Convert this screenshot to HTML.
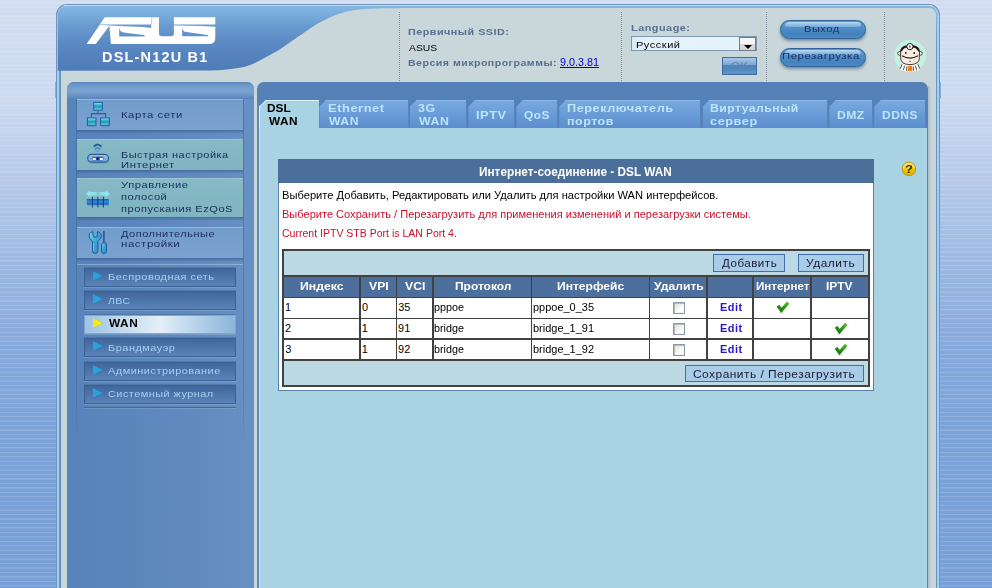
<!DOCTYPE html>
<html lang="ru">
<head>
<meta charset="utf-8">
<title>ASUS DSL-N12U B1 - DSL WAN</title>
<style>
*{box-sizing:border-box;margin:0;padding:0}
html,body{width:992px;height:588px;overflow:hidden}
body{position:relative;font-family:"Liberation Sans",sans-serif;
 background:
  repeating-linear-gradient(to bottom,rgba(255,255,255,0) 0,rgba(255,255,255,0) 2.100px,rgba(255,255,255,.14) 2.4px,rgba(255,255,255,.14) 3.300px,rgba(255,255,255,0) 3.6px,rgba(255,255,255,0) 4.45px),
  linear-gradient(to bottom,#d2ddf2 0,#ccd9f0 100px,#b5c9ea 183px,#9bb8e2 266px,#86a9dc 349px,#7ba3d9 432px,#78a0d7 588px);}
.abs{position:absolute}
.tx{position:absolute;white-space:nowrap;transform-origin:0 50%;display:block}
#wrap{left:56px;top:3.9px;width:884px;height:600px;background:#7294ba;border-radius:11px 11px 0 0;overflow:hidden}
#wrap i{position:absolute;bottom:0;display:block}
#w1{left:.8px;right:.8px;top:.8px;background:#a0d0f2;border-radius:10.2px 10.2px 0 0}
#w2{left:2.7px;right:2.7px;top:2.5px;background:linear-gradient(to bottom,#82b7e0 0,#6c96c2 40px,#6790bb 100%);border-radius:8.500px 8.5px 0 0}
#w3{left:4.8px;right:4.2px;top:4.1px;background:#bdd6e9;border-radius:7px 7px 0 0}
#w4{left:5.8px;right:4.2px;top:4.1px;background:#c9d6da;border-radius:6px 7px 0 0}
/* sidebar */
#side{left:67.3px;top:82px;width:186.4px;height:520px;border-radius:7px 7px 0 0;
 background:linear-gradient(to right,#5783bb 0,#5c87bd 40%,#6790c3 100%);overflow:hidden}
#sidecap{left:0;top:0;width:187px;height:17px;background:linear-gradient(to bottom,#5681b8 0,#6892c6 10%,#7aa2d1 45%,#779fce 60%,#6690c3 85%,#5b85bb 100%)}
.mi{left:9.5px;width:166.2px;border-top:1px solid rgba(255,255,255,.22)}
.mi.b{background:linear-gradient(to bottom,#719dcb,#789fcd 60%,#7ba2ce)}
.mi.g{background:linear-gradient(to bottom,#86bac6,#82b6c2 60%,#80b4c0)}
.mi:after{content:"";position:absolute;left:0;right:0;bottom:-4px;height:4px;background:linear-gradient(to bottom,rgba(40,70,120,.45),rgba(40,70,120,0))}
.si{left:16.7px;width:152px;height:19px;border:1px solid #3c6195;
 background:linear-gradient(to bottom,#42669a 0,#4a71a6 35%,#5179ae 65%,#5b83b7 100%);box-shadow:0 1px 0 rgba(255,255,255,.14), 0 -1px 0 rgba(40,70,110,.25)}
.si.sel{background:linear-gradient(to right,#9fc3e4 0,#cfe3f2 35%,#e3eff8 50%,#b5d2ea 75%,#8db4dc 100%);border-color:#7fa6d0}
.arr{position:absolute;left:7.6px;top:2.2px;width:0;height:0;border-left:10.2px solid #27a2dc;border-top:5.300px solid transparent;border-bottom:5.3px solid transparent;filter:drop-shadow(0 .6px .6px rgba(20,60,110,.7))}
.sel .arr{border-left-color:#f5ea12;filter:drop-shadow(0 .5px .5px rgba(120,110,20,.6))}
/* main */
#main{left:256.6px;top:82px;width:671.6px;height:520px;border-radius:7px 7px 0 0;background:#5580b8;overflow:hidden}
#content{left:2.4px;top:46px;width:667.800px;height:480px;background:#a9d2e3;border-left:1px solid #c4e4f2;border-right:1px solid #b2d6ee}
.tab{top:18px;height:28px;background:linear-gradient(to bottom,#78a9e0 0,#6b9dd8 45%,#5c8ecf 100%);
 clip-path:polygon(6.5px 0,100% 0,100% 100%,0 100%,0 6.5px);box-shadow:inset 0 1px 0 rgba(255,255,255,.16)}
.tab:before{content:"";position:absolute;right:0;top:0;bottom:0;width:1px;background:#5583c3}
.tab.act{background:#a9d2e3;box-shadow:inset 1px 1px 0 #dcf2fa}
.tab.act:before{display:none}
#title{left:278.2px;top:159.2px;width:595.6px;height:23.4px;background:#4c6e9b}
#box{left:278.2px;top:182.5px;width:595.6px;height:208.3px;background:#fff;border:1px solid #5b83b0;border-top:none}
#tbl{left:282.2px;top:249px;width:587.5px;height:137.7px;background:#414141}
.c{position:absolute;background:#fff}
.c.h{background:#4c6f9e}
.c.l{background:#bdd9e4}
.btn{position:absolute;background:#a9cde8;border:1px solid #3f6fae}
.cb{position:absolute;width:12.6px;height:12.2px;background:linear-gradient(135deg,#dcdcd8,#fff 70%);border:1px solid #8a9aa6;box-shadow:inset 1px 1px 0 #b8b8b4, inset -1px -1px 0 #f4f4f4}
.dot{position:absolute;top:12px;height:69px;width:1px;background:repeating-linear-gradient(to bottom,#7f8e9c 0,#7f8e9c 1px,transparent 1px,transparent 2px)}
.pill{position:absolute;left:779.5px;width:86.3px;height:18.700px;border-radius:9.4px;border:1px solid #2f6397;
 background:linear-gradient(to bottom,#5b98cf 0,#4f8fc9 40%,#4482be 78%,#4b8bc5 100%);box-shadow:0 1.500px 2.5px rgba(70,100,130,.55),0 3px 3px rgba(120,145,165,.35)}
.pill:before{content:"";position:absolute;left:4px;right:4px;top:.6px;height:5.5px;border-radius:6px 6px 3px 3px/5px 5px 2px 2px;background:linear-gradient(to bottom,rgba(190,220,242,.95),rgba(140,186,226,.55))}
</style>
</head>
<body>
<div id="wrap" class="abs"><i id="w1"></i><i id="w2"></i><i id="w3"></i><i id="w4"></i></div>

<!-- banner -->
<svg class="abs" style="left:57px;top:5px" width="348" height="67" viewBox="57 5 348 67">
 <defs>
  <linearGradient id="bg1" x1="0" y1="0" x2="0" y2="1">
   <stop offset="0" stop-color="#86b8e4"/><stop offset=".12" stop-color="#7aaedc"/><stop offset=".3" stop-color="#6a9bd0"/><stop offset=".6" stop-color="#5a88c2"/><stop offset="1" stop-color="#4f7cb8"/>
  </linearGradient>
 </defs>
 <path d="M57.8,70.8 L200,70.6 C206.2,70.4 215.7,70.4 222,69.9 C228.3,69.5 233.7,68.6 238,67.9 C242.3,67.2 244.7,66.8 248,65.7 C251.3,64.6 254.7,63.1 258,61.5 C261.3,59.9 264.7,57.9 268,56 C271.3,54.1 274.7,52.4 278,50.4 C281.3,48.4 284.7,46.1 288,43.8 C291.3,41.5 293.8,39.7 298,36.8 C302.2,33.9 309.1,29.0 313.1,26.4 C317.1,23.8 319.2,22.8 322.2,21.2 C325.2,19.6 328.3,18.0 331.3,16.7 C334.3,15.4 337.3,14.3 340.3,13.4 C343.3,12.5 346.5,11.6 349.4,11 C352.3,10.4 354.6,10.1 357.9,9.7 C361.2,9.3 364.5,9.0 369,8.8 C373.5,8.6 379.0,8.4 385,8.3 C391.0,8.2 399.2,8.1 405,8.0 L405,5.7 L68,5.7 Q57.8,5.7 57.8,16 Z" fill="url(#bg1)"/>
 <!-- ASUS logo -->
 <path fill="#fff" fill-rule="evenodd" d="M104.8,17.2 H159 V33.6 Q159,36.3 161.7,36.3 H171.2 Q173.900,36.3 173.900,33.6 V17.2 H215.3 V38 Q215.3,44.1 209,44.1 H110.9 L109.4,25.7 L95.8,44.1 H86.6 Z
  M119.2,27 C119.4,30.5 121.5,32.600 125.4,32.75 L143.6,34.9 L144.5,34.95 V36.4 H119.2 Z
  M182.2,26.4 C182.4,30 184,32 186.4,32.1 L207.6,34.9 L208.2,34.95 V36.2 H182.2 Z
  M100.2,24.5 L151.2,24.5 L151.2,27.9 L142,27 L130,26.4 L118,26.1 L106,25.3 L99.900,25.1 Z
  M174,24.6 L215.3,24.6 L215.3,26.7 L200,26.1 L188,25.800 L176,25.5 L174,25.4 Z"/>
 <path d="M151.700,17.2 V24.5" stroke="#a8c8ea" stroke-width=".9"/>
</svg>

<div class="abs" style="left:64px;top:4.8px;width:868px;height:1.6px;background:#b2defa"></div>
<div class="abs" style="left:55px;top:82px;width:1.2px;height:16.4px;background:#86aed6"></div><div class="abs" style="left:939.8px;top:82px;width:1.2px;height:16.4px;background:#86aed6"></div>
<!-- header dotted separators -->
<div class="dot" style="left:398.5px"></div>
<div class="dot" style="left:621px"></div>
<div class="dot" style="left:766.3px"></div>
<div class="dot" style="left:884px"></div>

<!-- language select + OK -->
<div class="abs" style="left:631.2px;top:36.2px;width:125.4px;height:15.2px;background:linear-gradient(to right,#dbeaf4 0,#e6f3fb 12%,#e4f2fa 100%);border:1px solid #7f98b2"></div>
<div class="abs" style="left:739.3px;top:37px;width:17px;height:13.600px;background:linear-gradient(to bottom,#f7f7f7 0,#f4f4f4 48%,#d9d9d9 52%,#d4d4d4 100%);border:1px solid #737c86"></div>
<div class="abs" style="left:743.6px;top:45.1px;width:0;height:0;border-top:4px solid #000;border-left:4px solid transparent;border-right:4px solid transparent"></div>
<div class="abs" style="left:722.3px;top:57px;width:34.5px;height:17.6px;border:1px solid #3f6a9c;background:linear-gradient(to bottom,#a8c9e8 0,#8db5dc 25%,#7aa6d2 44%,#4c83bb 47%,#5088c0 70%,#6097cc 100%)"></div>

<!-- pill buttons -->
<div class="pill" style="top:20px"></div>
<div class="pill" style="top:48.2px"></div>



<!-- sidebar -->
<div id="side" class="abs">
 <div id="sidecap" class="abs"></div>
 <div class="abs" style="left:9.1px;top:17px;width:1px;height:350px;background:linear-gradient(to bottom,rgba(60,95,150,.55) 0,rgba(60,95,150,.45) 80%,rgba(60,95,150,0) 100%)"></div>
 <div class="abs" style="left:175.7px;top:17px;width:1px;height:350px;background:linear-gradient(to bottom,rgba(60,95,150,.55) 0,rgba(60,95,150,.45) 80%,rgba(60,95,150,0) 100%)"></div>
 <div class="abs mi b" style="top:17px;height:31px"></div>
 <div class="abs mi g" style="top:56.6px;height:31.2px"></div>
 <div class="abs mi g" style="top:96px;height:39.3px"></div>
 <div class="abs mi b" style="top:145px;height:30.8px"></div>
 <div class="abs" style="left:9.5px;top:182px;width:166.2px;height:1px;background:rgba(255,255,255,.28)"></div>
 <div class="abs si" style="top:185.5px"><i class="arr"></i></div>
 <div class="abs si" style="top:209px"><i class="arr"></i></div>
 <div class="abs si sel" style="top:232.5px"><i class="arr"></i></div>
 <div class="abs si" style="top:256.2px"><i class="arr"></i></div>
 <div class="abs si" style="top:279.6px"><i class="arr"></i></div>
 <div class="abs si" style="top:302.8px"><i class="arr"></i></div>
 <div class="abs" style="left:16.7px;top:325px;width:152px;height:1px;background:#3f689e"></div>
 <div class="abs" style="left:16.7px;top:326px;width:152px;height:1px;background:rgba(255,255,255,.15)"></div>
</div>

<div class="abs" style="left:928px;top:86px;width:3px;height:510px;background:linear-gradient(to right,#a9bac6,#c9d6da)"></div>
<!-- main panel -->
<div id="main" class="abs">
 <div id="content" class="abs"></div>
 <div class="abs" style="left:0;top:20px;width:2.4px;height:500px;background:#6088b8"></div>
 <div class="abs tab act" style="left:2.4px;width:60.4px"></div>
 <svg class="abs" style="left:2.4px;top:18px" width="8" height="8"><path d="M.5,7 L7,.5" stroke="#dcf2fa" stroke-width="1" fill="none"/></svg>
 <div class="abs tab" style="left:62.9px;width:89.7px"></div>
 <div class="abs tab" style="left:153.4px;width:57.3px"></div>
 <div class="abs tab" style="left:211.9px;width:46.8px"></div>
 <div class="abs tab" style="left:259.9px;width:41.8px"></div>
 <div class="abs tab" style="left:302.7px;width:141.9px"></div>
 <div class="abs tab" style="left:446px;width:125.6px"></div>
 <div class="abs tab" style="left:572.8px;width:43.9px"></div>
 <div class="abs tab" style="left:617.7px;width:51.9px"></div>
</div>

<div id="title" class="abs"></div>
<div id="box" class="abs"></div>
<div id="tbl" class="abs">
<div class="c l" style="left:2px;top:2.0px;width:583.5px;height:24.0px"></div>
<div class="c h" style="left:2.0px;top:28.0px;width:75.0px;height:19.5px"></div>
<div class="c h" style="left:78.5px;top:28.0px;width:35.0px;height:19.5px"></div>
<div class="c h" style="left:115.0px;top:28.0px;width:34.8px;height:19.5px"></div>
<div class="c h" style="left:151.5px;top:28.0px;width:97.2px;height:19.5px"></div>
<div class="c h" style="left:250.3px;top:28.0px;width:116.2px;height:19.5px"></div>
<div class="c h" style="left:368.0px;top:28.0px;width:56.3px;height:19.5px"></div>
<div class="c h" style="left:425.7px;top:28.0px;width:44.4px;height:19.5px"></div>
<div class="c h" style="left:471.7px;top:28.0px;width:56.2px;height:19.5px"></div>
<div class="c h" style="left:529.5px;top:28.0px;width:56.0px;height:19.5px"></div>
<div class="c " style="left:2.0px;top:49.0px;width:75.0px;height:19.5px"></div>
<div class="c " style="left:78.5px;top:49.0px;width:35.0px;height:19.5px"></div>
<div class="c " style="left:115.0px;top:49.0px;width:34.8px;height:19.5px"></div>
<div class="c " style="left:151.5px;top:49.0px;width:97.2px;height:19.5px"></div>
<div class="c " style="left:250.3px;top:49.0px;width:116.2px;height:19.5px"></div>
<div class="c " style="left:368.0px;top:49.0px;width:56.3px;height:19.5px"></div>
<div class="c " style="left:425.7px;top:49.0px;width:44.4px;height:19.5px"></div>
<div class="c " style="left:471.7px;top:49.0px;width:56.2px;height:19.5px"></div>
<div class="c " style="left:529.5px;top:49.0px;width:56.0px;height:19.5px"></div>
<div class="c " style="left:2.0px;top:70.0px;width:75.0px;height:19.4px"></div>
<div class="c " style="left:78.5px;top:70.0px;width:35.0px;height:19.4px"></div>
<div class="c " style="left:115.0px;top:70.0px;width:34.8px;height:19.4px"></div>
<div class="c " style="left:151.5px;top:70.0px;width:97.2px;height:19.4px"></div>
<div class="c " style="left:250.3px;top:70.0px;width:116.2px;height:19.4px"></div>
<div class="c " style="left:368.0px;top:70.0px;width:56.3px;height:19.4px"></div>
<div class="c " style="left:425.7px;top:70.0px;width:44.4px;height:19.4px"></div>
<div class="c " style="left:471.7px;top:70.0px;width:56.2px;height:19.4px"></div>
<div class="c " style="left:529.5px;top:70.0px;width:56.0px;height:19.4px"></div>
<div class="c " style="left:2.0px;top:91.0px;width:75.0px;height:19.4px"></div>
<div class="c " style="left:78.5px;top:91.0px;width:35.0px;height:19.4px"></div>
<div class="c " style="left:115.0px;top:91.0px;width:34.8px;height:19.4px"></div>
<div class="c " style="left:151.5px;top:91.0px;width:97.2px;height:19.4px"></div>
<div class="c " style="left:250.3px;top:91.0px;width:116.2px;height:19.4px"></div>
<div class="c " style="left:368.0px;top:91.0px;width:56.3px;height:19.4px"></div>
<div class="c " style="left:425.7px;top:91.0px;width:44.4px;height:19.4px"></div>
<div class="c " style="left:471.7px;top:91.0px;width:56.2px;height:19.4px"></div>
<div class="c " style="left:529.5px;top:91.0px;width:56.0px;height:19.4px"></div>
<div class="c l" style="left:2px;top:112.0px;width:583.5px;height:24.0px"></div>
<div class="btn" style="left:430.5px;top:5.4px;width:72.3px;height:17.4px"></div>
<div class="btn" style="left:515.5px;top:5.4px;width:66px;height:17.4px"></div>
<div class="btn" style="left:402.7px;top:115.5px;width:178.7px;height:17.6px"></div>
<div class="cb" style="left:390.7px;top:53.1px"></div>
<div class="cb" style="left:390.7px;top:74.2px"></div>
<div class="cb" style="left:390.7px;top:95.2px"></div>
</div>

<svg class="abs" style="left:0;top:0;pointer-events:none" width="992" height="588" viewBox="0 0 992 588">
 <defs>
  <linearGradient id="cy" x1="0" y1="0" x2="0" y2="1"><stop offset="0" stop-color="#93e6ef"/><stop offset=".45" stop-color="#22a7be"/><stop offset=".6" stop-color="#1fa3bb"/><stop offset="1" stop-color="#74dcec"/></linearGradient>
  <linearGradient id="gr" x1="0" y1="1" x2="1" y2="0"><stop offset="0" stop-color="#1d7410"/><stop offset=".5" stop-color="#2f9a16"/><stop offset="1" stop-color="#4fc024"/></linearGradient>
  <linearGradient id="tool" x1="0" y1="0" x2="1" y2="1"><stop offset="0" stop-color="#7fd8f0"/><stop offset=".5" stop-color="#35a4d4"/><stop offset="1" stop-color="#2b93c8"/></linearGradient>
  <linearGradient id="bar" x1="0" y1="0" x2="0" y2="1"><stop offset="0" stop-color="#1660b4"/><stop offset=".5" stop-color="#2b8fe0"/><stop offset="1" stop-color="#155cb0"/></linearGradient>
  <linearGradient id="help" x1="0" y1="0" x2="0" y2="1"><stop offset="0" stop-color="#f7e67e"/><stop offset=".42" stop-color="#f3d544"/><stop offset=".5" stop-color="#ecc10c"/><stop offset="1" stop-color="#e4b000"/></linearGradient>
  <linearGradient id="rt" x1="0" y1="0" x2="0" y2="1"><stop offset="0" stop-color="#9cc4e8"/><stop offset="1" stop-color="#6a9fd2"/></linearGradient>
 </defs>
 <!-- network map -->
 <g>
  <path d="M98,110.5 V113.6 M91.5,117.3 V113.6 H105.6 V117.3" fill="none" stroke="#2c5ea8" stroke-width="1.1"/>
  <rect x="93.7" y="102.4" width="8.6" height="7.8" fill="url(#cy)" stroke="#2458a8" stroke-width="1"/>
  <rect x="87.4" y="117.9" width="8.6" height="7.4" fill="url(#cy)" stroke="#2458a8" stroke-width="1"/>
  <rect x="100.6" y="117.9" width="8.7" height="7.4" fill="url(#cy)" stroke="#2458a8" stroke-width="1"/>
  <path d="M87.5,126.6 H96.5 M100.5,126.6 H109.8" stroke="#5078aa" stroke-width=".8" opacity=".6"/>
 </g>
 <!-- router -->
 <g>
  <path d="M93.7,146.7 Q97.6,142.300 101.500,146.7" fill="none" stroke="#2f5f98" stroke-width="1.9"/>
  <path d="M94.9,149.600 Q97.6,146.300 100.3,149.600" fill="none" stroke="#4a89c2" stroke-width="1.8"/>
  <path d="M96,151.900 Q97.6,149.600 99.2,151.900" fill="none" stroke="#62aadc" stroke-width="1.6"/>
  <rect x="88.2" y="156" width="21.6" height="8" rx="4" fill="#5f8fb0" opacity=".35"/>
  <rect x="87.7" y="154.4" width="20.8" height="7.8" rx="3.9" fill="url(#rt)" stroke="#2f5f96" stroke-width="1.2"/>
  <rect x="91.9" y="156.6" width="11.6" height="3.8" rx="1.2" fill="#3f72b6"/>
  <rect x="96.4" y="157" width="2.8" height="3.2" fill="#18288a"/>
  <rect x="92.8" y="158" width="2.9" height="2" fill="#fff"/>
  <rect x="99.9" y="158" width="2.9" height="2" fill="#fff"/>
 </g>
 <!-- bandwidth -->
 <g>
  <linearGradient id="arw" x1="0" y1="0" x2="1" y2="0"><stop offset="0" stop-color="#8cecf2"/><stop offset=".38" stop-color="#8cecf2" stop-opacity=".75"/><stop offset=".5" stop-color="#8cecf2" stop-opacity=".25"/><stop offset=".62" stop-color="#8cecf2" stop-opacity=".75"/><stop offset="1" stop-color="#8cecf2"/></linearGradient>
  <path d="M86,193.8 L90.2,190.4 V192 H105.8 V190.4 L110,193.8 L105.8,197.2 V195.600 H90.2 V197.2 Z" fill="url(#arw)"/>
  <rect x="86.8" y="199" width="22.1" height="5.7" rx=".6" fill="url(#bar)"/>
  <path d="M92.4,196.8 V207.5 M97.9,196.8 V207.5 M103.4,196.8 V207.5" stroke="#0f2f6c" stroke-width=".9"/>
  <rect x="88" y="205" width="22" height="1" fill="#4a7a98" opacity=".35"/>
 </g>
 <!-- tools -->
 <g>
  <path d="M92.9,231.7 C90.2,231.9 88.700,234.4 89.2,236.8 C89.6,239 91.6,240 92.5,241.6 V250.900 Q92.5,253.5 95.2,253.5 Q97.9,253.5 97.9,250.900 V241.6 C98.8,240 100.8,239 101.2,236.8 C101.700,234.4 100.2,231.9 97.5,231.7 L97.3,235.8 Q96.900,237.300 95.2,237.300 Q93.500,237.300 93.1,235.800 Z" fill="url(#tool)" stroke="#1a5a9a" stroke-width="1"/>
  <rect x="103.15" y="231" width="1.5" height="12.2" fill="#1f4f98"/>
  <rect x="101.5" y="242.6" width="5.000" height="10.9" rx="2.400" fill="url(#tool)" stroke="#1a5a9a" stroke-width="1"/>
  <path d="M93.6,243 V251" stroke="#8fe2f6" stroke-width=".9" opacity=".7"/>
 </g>
 <!-- checks -->
 <g fill="none" stroke="url(#gr)" stroke-width="3.3" stroke-linejoin="miter">
  <path d="M778,305.6 L781.4,310.400 L788.200,302.7"/>
  <path d="M836.1,326.7 L839.5,331.5 L846.3,323.8"/>
  <path d="M836.1,347.7 L839.5,352.5 L846.3,344.8"/>
 </g>
 <g fill="#999" opacity=".5">
  <rect x="779" y="312.6" width="5.5" height=".8"/><rect x="837.1" y="333.6" width="5.5" height=".8"/><rect x="837.1" y="354.6" width="5.5" height=".8"/>
 </g>
 <!-- help -->
 <circle cx="908.9" cy="168.900" r="6.800" fill="url(#help)" stroke="#b8920c" stroke-width=".9"/>
 <!-- doctor -->
 <g>
  <circle cx="910.1" cy="55.7" r="16" fill="#c3f1e3"/>
  <path d="M902.5,64 L900.5,70 Q910,73.500 919.500,70 L917.5,64 Z" fill="#fff"/>
  <path d="M902.2,64.2 L900.3,68.6 M904.6,65.600 L903.4,70.2 M906.9,66.400 L906.5,70.8 M913.1,66.400 L913.5,70.8 M915.4,65.600 L916.6,70.2 M917.8,64.2 L919.7,68.6" stroke="#2a1a16" stroke-width=".75" fill="none"/>
  <path d="M908.1,65.8 H911.9 L912.5,71.2 H907.5 Z" fill="#f08a1c"/>
  <path d="M908.4,67 L911.8,70 M911.6,67 L908.2,70" stroke="#d86a10" stroke-width=".6"/>
  <circle cx="899.6" cy="53.4" r="1.9" fill="#f7ede2" stroke="#2a1a16" stroke-width=".75"/>
  <circle cx="920.4" cy="53.4" r="1.9" fill="#f7ede2" stroke="#2a1a16" stroke-width=".75"/>
  <path d="M900.6,51 Q900.6,46.800 910,46.800 Q919.400,46.800 919.400,51 V57.5 Q919.4,64.600 910,64.600 Q900.600,64.600 900.600,57.500 Z" fill="#f7ede2" stroke="#2a1a16" stroke-width=".85"/>
  <path d="M900.300,52.2 Q900,46.2 906.8,45.300 L907.600,47.300 Q903.4,47.800 902.300,50.8 Z" fill="#2a1a16"/>
  <path d="M919.700,52.2 Q920,46.2 913.2,45.300 L912.400,47.300 Q916.600,47.800 917.700,50.8 Z" fill="#2a1a16"/>
  <circle cx="909.9" cy="46.600" r="3.100" fill="#fff" stroke="#2a1a16" stroke-width="1"/>
  <circle cx="909.9" cy="46.600" r="1.100" fill="#6a6a6a"/>
  <circle cx="905.8" cy="53" r=".9" fill="#2a1a16"/><circle cx="914.2" cy="53" r=".9" fill="#2a1a16"/>
  <path d="M901.900,55.8 Q910,60.400 918.100,55.800" fill="none" stroke="#2a1a16" stroke-width="1.100"/>
  <circle cx="910" cy="61.400" r=".6" fill="#2a1a16"/>
 </g>
</svg>

<span class="tx" style="left:101.80px;top:50.00px;font-size:14.3px;line-height:14.3px;font-weight:bold;color:#fff;letter-spacing:1.2px;transform:scaleX(1.0104);">DSL-N12U B1</span>
<span class="tx" style="left:408.02px;top:26.80px;font-size:9.9px;line-height:9.9px;font-weight:bold;color:#567092;letter-spacing:0.45px;transform:scaleX(1.0930);">Первичный SSID:</span>
<span class="tx" style="left:408.70px;top:42.70px;font-size:9.7px;line-height:9.7px;font-weight:normal;color:#000;transform:scaleX(1.0689);">ASUS</span>
<span class="tx" style="left:408.04px;top:57.70px;font-size:9.9px;line-height:9.9px;font-weight:bold;color:#567092;letter-spacing:0.45px;transform:scaleX(1.0717);">Версия микропрограммы:</span>
<span class="tx" style="left:559.89px;top:57.60px;font-size:10px;line-height:10px;font-weight:normal;color:#0000e0;transform:scaleX(1.0774);text-decoration:underline;">9.0.3.81</span>
<span class="tx" style="left:631.12px;top:22.70px;font-size:9.9px;line-height:9.9px;font-weight:bold;color:#567092;letter-spacing:0.45px;transform:scaleX(1.1013);">Language:</span>
<span class="tx" style="left:636.04px;top:39.70px;font-size:9.5px;line-height:9.5px;font-weight:normal;color:#000;letter-spacing:0.45px;transform:scaleX(1.1596);">Русский</span>
<span class="tx" style="left:730.75px;top:60.80px;font-size:11px;line-height:11px;font-weight:normal;color:#6283aa;transform:scaleX(1.0682);">OK</span>
<span class="tx" style="left:803.63px;top:23.80px;font-size:9.7px;line-height:9.7px;font-weight:normal;color:#1a3366;letter-spacing:0.45px;transform:scaleX(1.1428);">Выход</span>
<span class="tx" style="left:781.61px;top:51.40px;font-size:9.7px;line-height:9.7px;font-weight:normal;color:#1a3366;letter-spacing:0.45px;transform:scaleX(1.1767);">Перезагрузка</span>
<span class="tx" style="left:120.72px;top:109.90px;font-size:9.6px;line-height:9.6px;font-weight:normal;color:#1b2c5c;letter-spacing:0.45px;transform:scaleX(1.1782);">Карта сети</span>
<span class="tx" style="left:120.74px;top:149.85px;font-size:9.6px;line-height:9.6px;font-weight:normal;color:#1b2c5c;letter-spacing:0.45px;transform:scaleX(1.1442);">Быстрая настройка</span>
<span class="tx" style="left:120.71px;top:159.80px;font-size:9.6px;line-height:9.6px;font-weight:normal;color:#1b2c5c;letter-spacing:0.45px;transform:scaleX(1.1822);">Интернет</span>
<span class="tx" style="left:121.43px;top:179.85px;font-size:9.6px;line-height:9.6px;font-weight:normal;color:#1b2c5c;letter-spacing:0.45px;transform:scaleX(1.1657);">Управление</span>
<span class="tx" style="left:120.91px;top:191.60px;font-size:9.6px;line-height:9.6px;font-weight:normal;color:#1b2c5c;letter-spacing:0.45px;transform:scaleX(1.1552);">полосой</span>
<span class="tx" style="left:120.91px;top:203.70px;font-size:9.6px;line-height:9.6px;font-weight:normal;color:#1b2c5c;letter-spacing:0.45px;transform:scaleX(1.1566);">пропускания EzQoS</span>
<span class="tx" style="left:121.00px;top:229.10px;font-size:9.6px;line-height:9.6px;font-weight:normal;color:#1b2c5c;letter-spacing:0.45px;transform:scaleX(1.1442);">Дополнительные</span>
<span class="tx" style="left:121.18px;top:238.70px;font-size:9.6px;line-height:9.6px;font-weight:normal;color:#1b2c5c;letter-spacing:0.45px;transform:scaleX(1.1989);">настройки</span>
<span class="tx" style="left:107.84px;top:271.80px;font-size:9.8px;line-height:9.8px;font-weight:normal;color:#a6d1f3;letter-spacing:0.45px;transform:scaleX(1.1194);">Беспроводная сеть</span>
<span class="tx" style="left:108.30px;top:295.50px;font-size:9.8px;line-height:9.8px;font-weight:normal;color:#a6d1f3;letter-spacing:0.45px;transform:scaleX(1.0651);">ЛВС</span>
<span class="tx" style="left:108.60px;top:318.90px;font-size:10.3px;line-height:10.3px;font-weight:bold;color:#000;letter-spacing:0.5px;transform:scaleX(1.1498);">WAN</span>
<span class="tx" style="left:107.84px;top:342.65px;font-size:9.8px;line-height:9.8px;font-weight:normal;color:#a6d1f3;letter-spacing:0.45px;transform:scaleX(1.1182);">Брандмауэр</span>
<span class="tx" style="left:108.30px;top:365.80px;font-size:9.8px;line-height:9.8px;font-weight:normal;color:#a6d1f3;letter-spacing:0.45px;transform:scaleX(1.1162);">Администрирование</span>
<span class="tx" style="left:108.19px;top:388.50px;font-size:9.8px;line-height:9.8px;font-weight:normal;color:#a6d1f3;letter-spacing:0.45px;transform:scaleX(1.1089);">Системный журнал</span>
<span class="tx" style="left:267.06px;top:102.90px;font-size:10.9px;line-height:10.9px;font-weight:bold;color:#000;transform:scaleX(1.0892);">DSL</span>
<span class="tx" style="left:268.50px;top:115.90px;font-size:10.9px;line-height:10.9px;font-weight:bold;color:#000;letter-spacing:0.45px;transform:scaleX(1.0855);">WAN</span>
<span class="tx" style="left:327.69px;top:102.90px;font-size:10.9px;line-height:10.9px;font-weight:bold;color:#bce4fb;letter-spacing:0.45px;transform:scaleX(1.1860);">Ethernet</span>
<span class="tx" style="left:328.50px;top:115.90px;font-size:10.9px;line-height:10.9px;font-weight:bold;color:#bce4fb;letter-spacing:0.45px;transform:scaleX(1.1206);">WAN</span>
<span class="tx" style="left:418.31px;top:102.90px;font-size:10.9px;line-height:10.9px;font-weight:bold;color:#bce4fb;letter-spacing:0.45px;transform:scaleX(1.1357);">3G</span>
<span class="tx" style="left:418.50px;top:115.90px;font-size:10.9px;line-height:10.9px;font-weight:bold;color:#bce4fb;letter-spacing:0.45px;transform:scaleX(1.1323);">WAN</span>
<span class="tx" style="left:475.70px;top:109.60px;font-size:10.9px;line-height:10.9px;font-weight:bold;color:#bce4fb;letter-spacing:0.45px;transform:scaleX(1.1784);">IPTV</span>
<span class="tx" style="left:523.73px;top:109.60px;font-size:10.9px;line-height:10.9px;font-weight:bold;color:#bce4fb;letter-spacing:0.45px;transform:scaleX(1.0891);">QoS</span>
<span class="tx" style="left:566.80px;top:102.90px;font-size:10.9px;line-height:10.9px;font-weight:bold;color:#bce4fb;letter-spacing:0.45px;transform:scaleX(1.1687);">Переключатель</span>
<span class="tx" style="left:566.82px;top:115.90px;font-size:10.9px;line-height:10.9px;font-weight:bold;color:#bce4fb;letter-spacing:0.45px;transform:scaleX(1.1449);">портов</span>
<span class="tx" style="left:709.74px;top:102.90px;font-size:10.9px;line-height:10.9px;font-weight:bold;color:#bce4fb;letter-spacing:0.45px;transform:scaleX(1.1132);">Виртуальный</span>
<span class="tx" style="left:710.10px;top:115.90px;font-size:10.9px;line-height:10.9px;font-weight:bold;color:#bce4fb;letter-spacing:0.45px;transform:scaleX(1.1739);">сервер</span>
<span class="tx" style="left:836.74px;top:109.60px;font-size:10.9px;line-height:10.9px;font-weight:bold;color:#bce4fb;letter-spacing:0.45px;transform:scaleX(1.1124);">DMZ</span>
<span class="tx" style="left:881.95px;top:109.60px;font-size:10.9px;line-height:10.9px;font-weight:bold;color:#bce4fb;letter-spacing:0.45px;transform:scaleX(1.1002);">DDNS</span>
<span class="tx" style="left:479.46px;top:166.50px;font-size:11.9px;line-height:11.9px;font-weight:bold;color:#fff;transform:scaleX(0.9922);">Интернет-соединение - DSL WAN</span>
<span class="tx" style="left:281.73px;top:189.80px;font-size:10.8px;line-height:10.8px;font-weight:normal;color:#000;transform:scaleX(1.0313);">Выберите Добавить, Редактировать или Удалить для настройки WAN интерфейсов.</span>
<span class="tx" style="left:281.74px;top:208.70px;font-size:10.8px;line-height:10.8px;font-weight:normal;color:#cc102c;transform:scaleX(1.0231);">Выберите Сохранить / Перезагрузить для применения изменений и перезагрузки системы.</span>
<span class="tx" style="left:282.11px;top:227.50px;font-size:10.8px;line-height:10.8px;font-weight:normal;color:#cc102c;transform:scaleX(0.9749);">Current IPTV STB Port is LAN Port 4.</span>
<span class="tx" style="left:299.64px;top:280.40px;font-size:11.7px;line-height:11.7px;font-weight:bold;color:#fff;transform:scaleX(1.0444);">Индекс</span>
<span class="tx" style="left:369.00px;top:280.40px;font-size:11.7px;line-height:11.7px;font-weight:bold;color:#fff;transform:scaleX(1.0459);">VPI</span>
<span class="tx" style="left:405.05px;top:280.40px;font-size:11.7px;line-height:11.7px;font-weight:bold;color:#fff;transform:scaleX(1.0472);">VCI</span>
<span class="tx" style="left:454.75px;top:280.40px;font-size:11.7px;line-height:11.7px;font-weight:bold;color:#fff;transform:scaleX(1.0238);">Протокол</span>
<span class="tx" style="left:556.85px;top:280.40px;font-size:11.7px;line-height:11.7px;font-weight:bold;color:#fff;transform:scaleX(1.0323);">Интерфейс</span>
<span class="tx" style="left:653.60px;top:280.40px;font-size:11.7px;line-height:11.7px;font-weight:bold;color:#fff;transform:scaleX(1.0379);">Удалить</span>
<span class="tx" style="left:755.68px;top:280.40px;font-size:11.7px;line-height:11.7px;font-weight:bold;color:#fff;transform:scaleX(0.9881);">Интернет</span>
<span class="tx" style="left:826.20px;top:280.40px;font-size:11.7px;line-height:11.7px;font-weight:bold;color:#fff;transform:scaleX(1.0225);">IPTV</span>
<span class="tx" style="left:284.92px;top:302.00px;font-size:10.9px;line-height:10.9px;font-weight:normal;color:#000;">1</span>
<span class="tx" style="left:362.06px;top:302.00px;font-size:10.9px;line-height:10.9px;font-weight:normal;color:#000;">0</span>
<span class="tx" style="left:398.26px;top:302.00px;font-size:10.9px;line-height:10.9px;font-weight:normal;color:#000;">35</span>
<span class="tx" style="left:433.93px;top:302.00px;font-size:10.9px;line-height:10.9px;font-weight:normal;color:#000;transform:scaleX(0.9902);">pppoe</span>
<span class="tx" style="left:532.91px;top:302.00px;font-size:10.9px;line-height:10.9px;font-weight:normal;color:#000;transform:scaleX(1.0068);">pppoe_0_35</span>
<span class="tx" style="left:719.91px;top:303.00px;font-size:10.1px;line-height:10.1px;font-weight:bold;color:#2a18cc;letter-spacing:0.45px;transform:scaleX(1.0889);">Edit</span>
<span class="tx" style="left:285.09px;top:323.00px;font-size:10.9px;line-height:10.9px;font-weight:normal;color:#000;">2</span>
<span class="tx" style="left:361.72px;top:323.00px;font-size:10.9px;line-height:10.9px;font-weight:normal;color:#000;">1</span>
<span class="tx" style="left:398.09px;top:323.00px;font-size:10.9px;line-height:10.9px;font-weight:normal;color:#000;">91</span>
<span class="tx" style="left:433.93px;top:323.00px;font-size:10.9px;line-height:10.9px;font-weight:normal;color:#000;transform:scaleX(0.9905);">bridge</span>
<span class="tx" style="left:532.91px;top:323.00px;font-size:10.9px;line-height:10.9px;font-weight:normal;color:#000;transform:scaleX(1.0069);">bridge_1_91</span>
<span class="tx" style="left:719.91px;top:324.00px;font-size:10.1px;line-height:10.1px;font-weight:bold;color:#2a18cc;letter-spacing:0.45px;transform:scaleX(1.0889);">Edit</span>
<span class="tx" style="left:285.26px;top:344.00px;font-size:10.9px;line-height:10.9px;font-weight:normal;color:#000;">3</span>
<span class="tx" style="left:361.72px;top:344.00px;font-size:10.9px;line-height:10.9px;font-weight:normal;color:#000;">1</span>
<span class="tx" style="left:398.09px;top:344.00px;font-size:10.9px;line-height:10.9px;font-weight:normal;color:#000;">92</span>
<span class="tx" style="left:433.93px;top:344.00px;font-size:10.9px;line-height:10.9px;font-weight:normal;color:#000;transform:scaleX(0.9905);">bridge</span>
<span class="tx" style="left:532.91px;top:344.00px;font-size:10.9px;line-height:10.9px;font-weight:normal;color:#000;transform:scaleX(1.0069);">bridge_1_92</span>
<span class="tx" style="left:719.91px;top:345.00px;font-size:10.1px;line-height:10.1px;font-weight:bold;color:#2a18cc;letter-spacing:0.45px;transform:scaleX(1.0889);">Edit</span>
<span class="tx" style="left:722.20px;top:258.40px;font-size:10.9px;line-height:10.9px;font-weight:normal;color:#1a1a30;letter-spacing:0.45px;transform:scaleX(1.0663);">Добавить</span>
<span class="tx" style="left:806.21px;top:258.40px;font-size:10.9px;line-height:10.9px;font-weight:normal;color:#1a1a30;letter-spacing:0.45px;transform:scaleX(1.0995);">Удалить</span>
<span class="tx" style="left:692.84px;top:368.70px;font-size:10.9px;line-height:10.9px;font-weight:normal;color:#1a1a30;letter-spacing:0.45px;transform:scaleX(1.0938);">Сохранить / Перезагрузить</span>
<span class="tx" style="left:904.84px;top:164.10px;font-size:11.8px;line-height:11.8px;font-weight:bold;color:#3a3212;letter-spacing:0.45px;transform:scaleX(1.1007);">?</span>
</body>
</html>
